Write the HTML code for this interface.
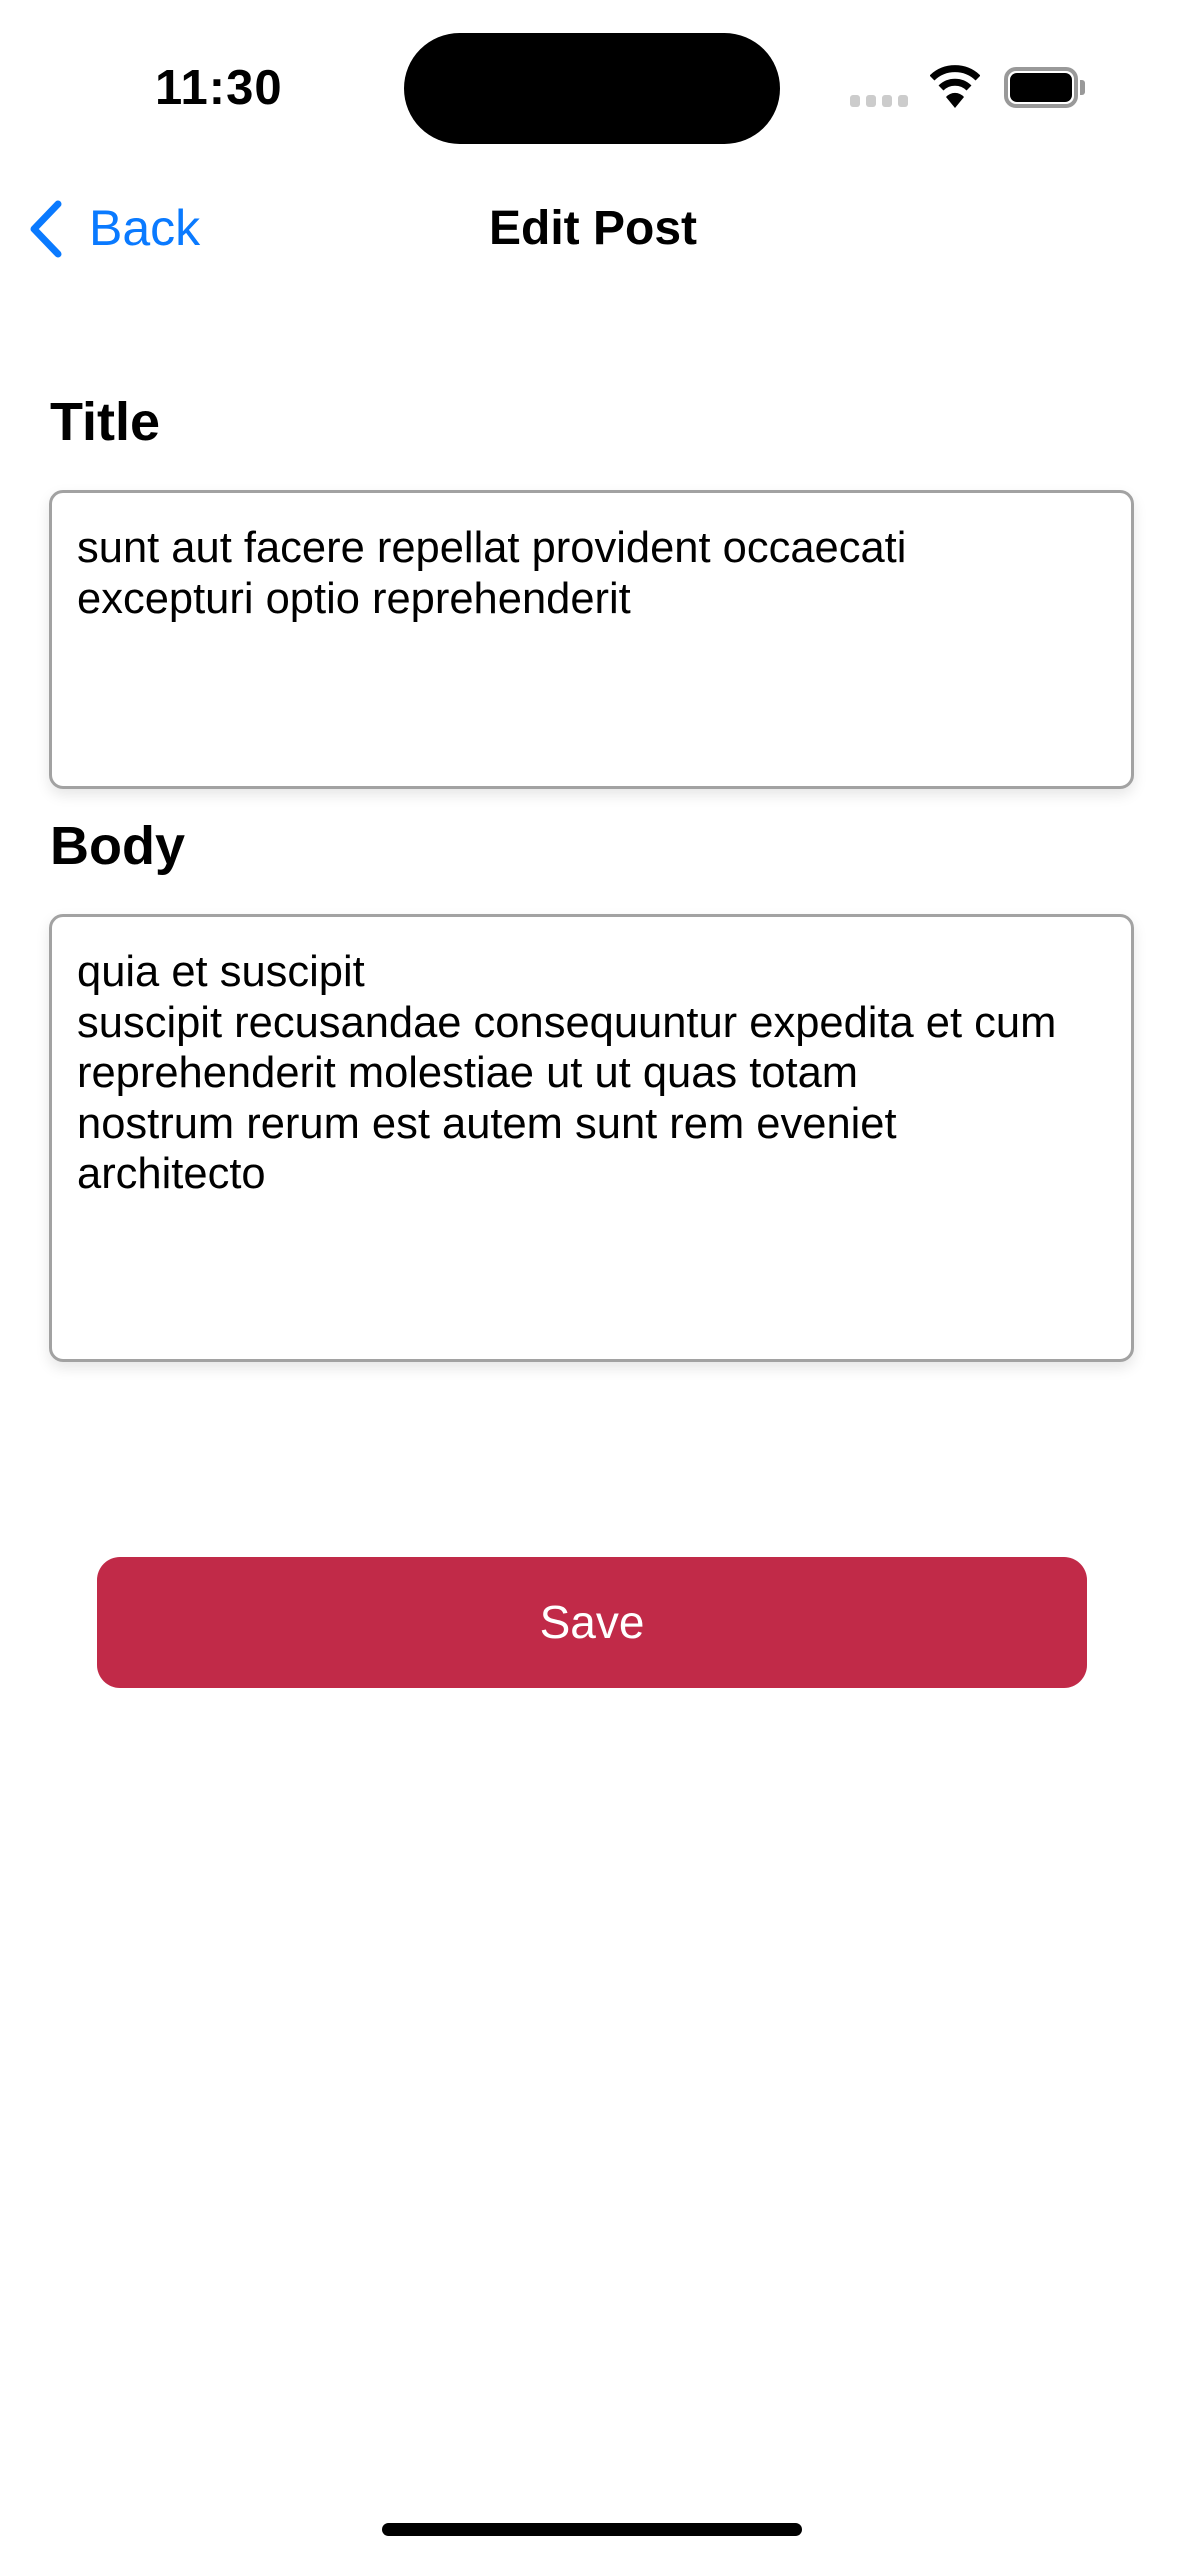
<!DOCTYPE html>
<html><head><meta charset="utf-8"><style>
*{margin:0;padding:0;box-sizing:border-box}
body{width:1179px;height:2556px;background:#fff;position:relative;overflow:hidden;font-family:"Liberation Sans",sans-serif;color:#000}
.abs{position:absolute}
.box{position:absolute;left:49px;width:1085px;border:3px solid #a2a2a2;border-radius:14px;box-shadow:0 6px 14px rgba(0,0,0,0.10);padding:30px 0 0 25px;font-size:43.5px;line-height:50.6px}
.lbl{position:absolute;left:50px;font-size:54px;font-weight:bold}
</style></head><body>
<div class="abs" style="left:155px;top:60px;font-size:49px;font-weight:bold;letter-spacing:1px">11:30</div>
<div class="abs" style="left:404px;top:33px;width:376px;height:111px;background:#000;border-radius:56px"></div>
<div class="abs" style="left:850px;top:95px;width:10px;height:12px;background:#ccc;border-radius:3px"></div>
<div class="abs" style="left:866px;top:95px;width:10px;height:12px;background:#ccc;border-radius:3px"></div>
<div class="abs" style="left:882px;top:95px;width:10px;height:12px;background:#ccc;border-radius:3px"></div>
<div class="abs" style="left:898px;top:95px;width:10px;height:12px;background:#ccc;border-radius:3px"></div>
<svg class="abs" style="left:930px;top:64px" width="50" height="44" viewBox="0 0 50 44">
<path d="M2 14 A33 33 0 0 1 48 14" stroke="#000" stroke-width="7" fill="none"/>
<path d="M11 24 A20 20 0 0 1 39 24" stroke="#000" stroke-width="7" fill="none"/>
<path d="M16 33 L25 44 L34 33 A12 12 0 0 0 16 33Z" fill="#000"/>
</svg>
<div class="abs" style="left:1004px;top:67px;width:74px;height:41px;border:4px solid #999;border-radius:12px"></div>
<div class="abs" style="left:1010px;top:73px;width:62px;height:29px;background:#000;border-radius:7px"></div>
<div class="abs" style="left:1080px;top:80px;width:5px;height:15px;background:#999;border-radius:0 3px 3px 0"></div>
<svg class="abs" style="left:26px;top:200px" width="40" height="58" viewBox="0 0 40 58"><path d="M32 4 L8 29 L32 54" stroke="#0a7aff" stroke-width="7" fill="none" stroke-linecap="round" stroke-linejoin="round"/></svg>
<div class="abs" style="left:89px;top:199px;font-size:50px;color:#0a7aff">Back</div>
<div class="abs" style="left:0;width:1186px;text-align:center;top:201px;font-size:48px;font-weight:bold">Edit Post</div>
<div class="lbl" style="top:391px">Title</div>
<div class="box" style="top:490px;height:299px">sunt aut facere repellat provident occaecati<br>excepturi optio reprehenderit</div>
<div class="lbl" style="top:815px">Body</div>
<div class="box" style="top:914px;height:448px">quia et suscipit<br>suscipit recusandae consequuntur expedita et cum<br>reprehenderit molestiae ut ut quas totam<br>nostrum rerum est autem sunt rem eveniet<br>architecto</div>
<div class="abs" style="left:97px;top:1557px;width:990px;height:131px;background:#c12a48;border-radius:23px;color:#fff;font-size:46px;text-align:center;line-height:131px">Save</div>
<div class="abs" style="left:382px;top:2523px;width:420px;height:13px;background:#000;border-radius:7px"></div>
</body></html>
